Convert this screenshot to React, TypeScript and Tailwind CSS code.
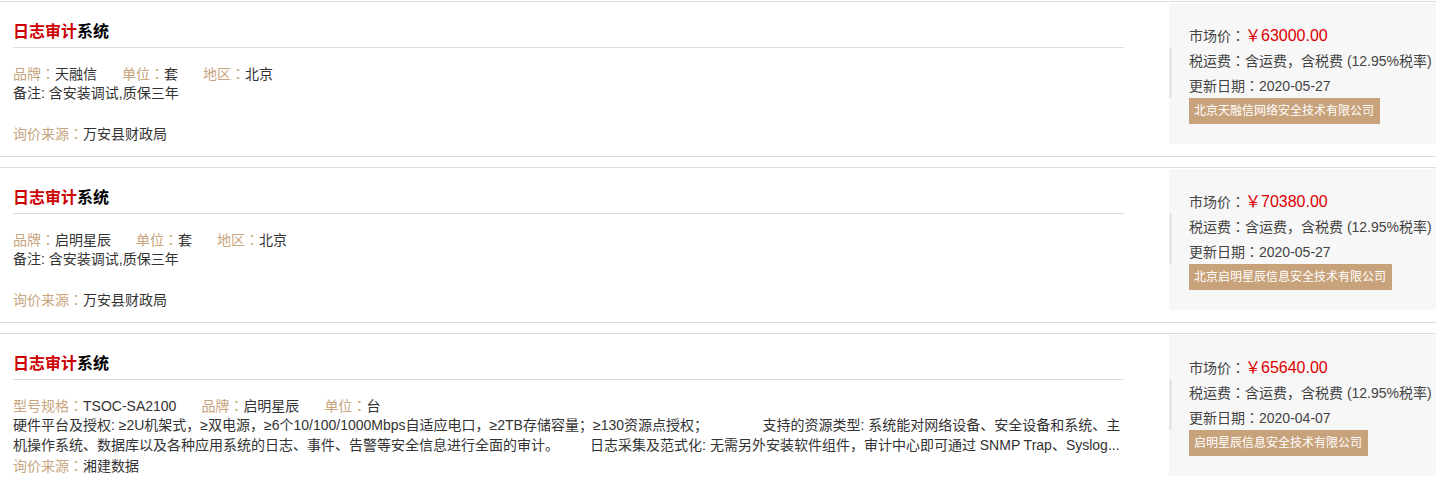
import React from "react";

type Field = { label: string; value: string };
type Item = {
  fields: Field[];
  desc: string;
  source: string;
  price: string;
  date: string;
  company: string;
};

const NB = "\u00a0\u00a0\u00a0\u00a0\u00a0\u00a0\u00a0\u00a0";
const NB14 = NB + "\u00a0\u00a0\u00a0\u00a0\u00a0\u00a0";

const longDesc =
  "硬件平台及授权: ≥2U机架式，≥双电源，≥6个10/100/1000Mbps自适应电口，≥2TB存储容量；≥130资源点授权；" +
  NB14 +
  "支持的资源类型: 系统能对网络设备、安全设备和系统、主机操作系统、数据库以及各种应用系统的日志、事件、告警等安全信息进行全面的审计。" +
  NB +
  "日志采集及范式化: 无需另外安装软件组件，审计中心即可通过 SNMP Trap、Syslog...";

const items: Item[] = [
  {
    fields: [
      { label: "品牌", value: "天融信" },
      { label: "单位", value: "套" },
      { label: "地区", value: "北京" },
    ],
    desc: "备注: 含安装调试,质保三年",
    source: "万安县财政局",
    price: "￥63000.00",
    date: "2020-05-27",
    company: "北京天融信网络安全技术有限公司",
  },
  {
    fields: [
      { label: "品牌", value: "启明星辰" },
      { label: "单位", value: "套" },
      { label: "地区", value: "北京" },
    ],
    desc: "备注: 含安装调试,质保三年",
    source: "万安县财政局",
    price: "￥70380.00",
    date: "2020-05-27",
    company: "北京启明星辰信息安全技术有限公司",
  },
  {
    fields: [
      { label: "型号规格", value: "TSOC-SA2100" },
      { label: "品牌", value: "启明星辰" },
      { label: "单位", value: "台" },
    ],
    desc: longDesc,
    source: "湘建数据",
    price: "￥65640.00",
    date: "2020-04-07",
    company: "启明星辰信息安全技术有限公司",
  },
];

function Colon() {
  return <span className="font-['Noto_Sans_CJK_JP',sans-serif]">：</span>;
}

function Row({ item, first }: { item: Item; first: boolean }) {
  return (
    <div
      className={`flex h-[156px] border-t border-b border-[#dcdcdc] ${first ? "" : "mt-[10px]"}`}
    >
      <div className="w-[1124px] shrink-0 pl-[13px]">
        <div className="pt-[18px] pb-[3px] border-b border-[#dcdcdc]">
          <div className="h-[24px] leading-[24px] text-[16px] font-bold">
            <span className="text-[#cc0000]">日志审计</span>
            <span className="text-black">系统</span>
          </div>
        </div>
        <div className="mt-[15px] flex gap-[25px] h-[20px] leading-[20px] text-[14px] whitespace-nowrap">
          {item.fields.map((f, i) => (
            <span key={i}>
              <span className="text-[#c8a47e]">
                {f.label}
                <Colon />
              </span>
              <span className="text-[#333]">{f.value}</span>
            </span>
          ))}
        </div>
        <div className="h-[40px] leading-[20px] text-[14px] text-[#333] line-clamp-2 overflow-hidden">
          {item.desc}
        </div>
        <div className="h-[20px] leading-[20px] text-[14px]">
          <span className="text-[#c8a47e]">
            询价来源
            <Colon />
          </span>
          <span className="text-[#333]">{item.source}</span>
        </div>
      </div>
      <div className="relative ml-auto mt-px h-[141px] w-[267px] shrink-0 bg-[#f7f7f7] pl-[20px] pt-[20px] text-[14px] text-[#444] whitespace-nowrap">
        <div className="absolute left-0 top-[44px] h-[51px] w-[3px] rounded-sm bg-[#e6e6e6]" />
        <div className="h-[25px] leading-[25px]">
          市场价
          <Colon />
          <span className="text-[16px] text-[#dd0000]">{item.price}</span>
        </div>
        <div className="h-[25px] leading-[25px]">
          税运费
          <Colon />
          含运费，含税费 (12.95%税率)
        </div>
        <div className="h-[25px] leading-[25px]">
          更新日期
          <Colon />
          {item.date}
        </div>
        <div className="inline-block h-[26px] leading-[26px] bg-[#c8a27a] pl-[5px] pr-[6px] text-[12px] text-white">
          {item.company}
        </div>
      </div>
    </div>
  );
}

export default function App() {
  return (
    <div
      className="w-[1436px] h-[480px] overflow-hidden bg-white pt-px"
      style={{ fontFamily: '"Liberation Sans", "Noto Sans CJK SC", sans-serif' }}
    >
      {items.map((it, i) => (
        <Row key={i} item={it} first={i === 0} />
      ))}
    </div>
  );
}
